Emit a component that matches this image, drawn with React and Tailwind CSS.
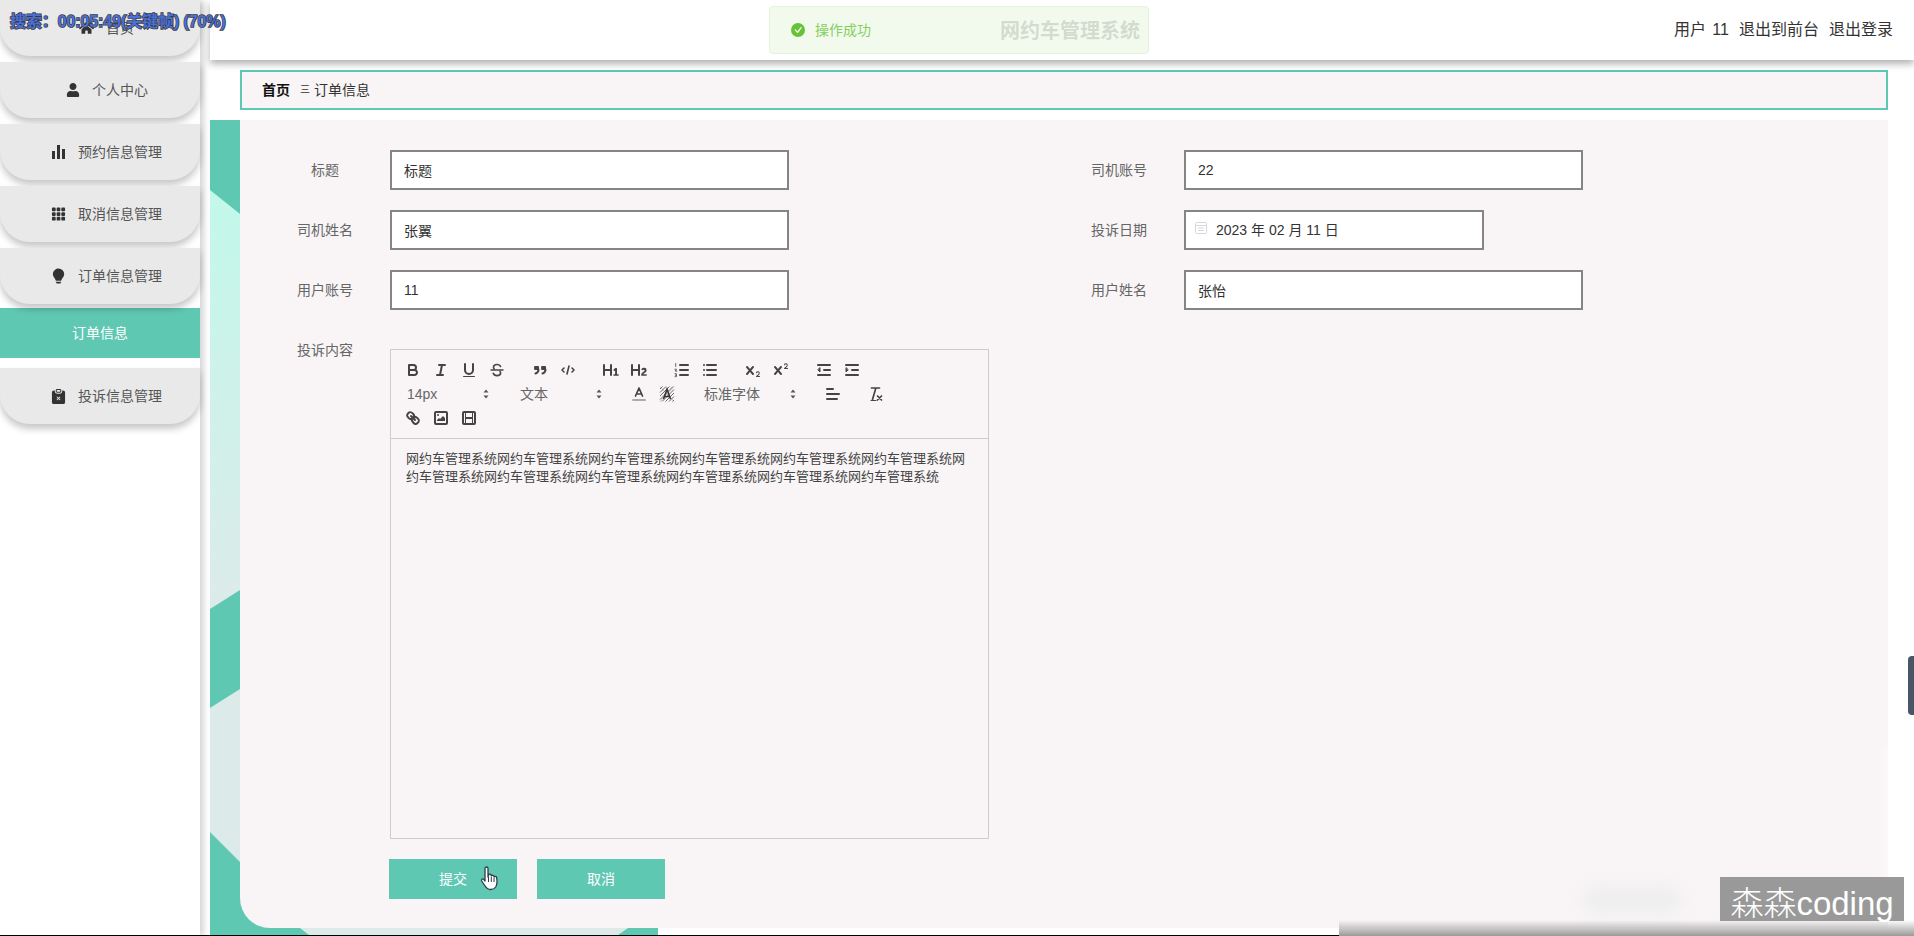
import React from 'react';
import { BsCheckCircleFill, BsClipboardXFill, BsGrid3X3GapFill, BsLightbulbFill } from 'react-icons/bs';
import { FaHome, FaUser } from 'react-icons/fa';

const FONT = 'font-["Liberation_Sans","Noto_Sans_CJK_SC",sans-serif]';

// Sidebar bar chart glyph
const BarsIcon = () => (
  <svg width="14" height="14" viewBox="0 0 14 14" fill="#333">
    <rect x="0" y="6" width="3" height="8" />
    <rect x="5" y="0" width="3" height="14" />
    <rect x="10" y="4" width="3" height="10" />
  </svg>
);

const menuTop = [
  { label: '首页', icon: <FaHome size={16} color="#333" /> },
  { label: '个人中心', icon: <FaUser size={14} color="#333" /> },
  { label: '预约信息管理', icon: <BarsIcon /> },
  { label: '取消信息管理', icon: <BsGrid3X3GapFill size={16} color="#333" /> },
  { label: '订单信息管理', icon: <BsLightbulbFill size={16} color="#333" /> },
];

function MenuItem({ item }) {
  return (
    <div className="flex h-14 items-center justify-center gap-[12px] rounded-b-[30px] bg-[#eae9e9] pl-[13px] text-sm text-[#555] shadow-[0_5px_7px_rgba(0,0,0,0.22)]">
      <span className="flex w-[15px] justify-center">{item.icon}</span>
      <span>{item.label}</span>
    </div>
  );
}

function Sidebar() {
  return (
    <aside className="z-20 w-[200px] shrink-0 bg-white shadow-[4px_0_6px_rgba(0,0,0,0.16)]">
      <div className="flex flex-col gap-1.5">
        {menuTop.map((item) => (
          <MenuItem key={item.label} item={item} />
        ))}
      </div>
      <div className="mt-1 flex h-[50px] items-center justify-center bg-[#5fc8b3] text-sm text-white">订单信息</div>
      <div className="mt-[10px]">
        <MenuItem item={{ label: '投诉信息管理', icon: <BsClipboardXFill size={15} color="#333" /> }} />
      </div>
    </aside>
  );
}

function Field({ label, value, date }) {
  return (
    <div className="flex h-10 w-[794px] items-center">
      <label className="mr-[5px] w-[120px] text-center text-sm text-[#666]">{label}</label>
      {date ? (
        <div className="flex h-10 w-[300px] items-center border-2 border-[#858585] bg-white pl-2 text-sm text-[#333]">
          <svg width="14" height="14" viewBox="0 0 14 14" fill="none" stroke="#d5d8de" className="mr-2 -mt-1">
            <rect x="1.5" y="1.5" width="11" height="11" rx="1" />
            <path d="M1.5 4.5h11M4 7h6M4 9.500h6" />
          </svg>
          {value}
        </div>
      ) : (
        <input
          readOnly
          value={value}
          className="h-10 w-[399px] border-2 border-[#858585] bg-white px-3 text-sm text-[#333] outline-none"
        />
      )}
    </div>
  );
}

// Editor toolbar icons, 18x18 like the original editor
const Ico = ({ children }) => (
  <svg
    width="18"
    height="18"
    viewBox="0 0 18 18"
    fill="none"
    stroke="#444"
    strokeWidth="2"
    strokeLinecap="round"
    strokeLinejoin="round"
  >
    {children}
  </svg>
);

const xMark = 'M9.65,5.241a1,1,0,0,0-1.409.108L6,7.964,3.759,5.349A1,1,0,0,0,2.241,6.649L4.684,9.5,2.241,12.35A1,1,0,0,0,3.759,13.65L6,11.036,8.241,13.65a1,1,0,1,0,1.518-1.3L7.316,9.5,9.759,6.651A1,1,0,0,0,9.65,5.241Z';

const icons = {
  bold: (
    <Ico>
      <path d="M5,4H9.5A2.5,2.5,0,0,1,12,6.5v0A2.5,2.5,0,0,1,9.5,9H5V4Z" />
      <path d="M5,9h5.5A2.5,2.5,0,0,1,13,11.5v0A2.5,2.5,0,0,1,10.5,14H5V9Z" />
    </Ico>
  ),
  italic: (
    <Ico>
      <path d="M7 4h6M5 14h6M8 14l2-10" />
    </Ico>
  ),
  underline: (
    <Ico>
      <path d="M5,3V9a4,4,0,0,0,8,0V3" />
      <rect x="3" y="15" width="12" height="1" rx=".5" fill="#444" stroke="none" />
    </Ico>
  ),
  strike: (
    <Ico>
      <path d="M3 9h12" strokeWidth="1.4" />
      <path d="M12.5 5.5C12 4.1 10.7 3.5 9 3.5c-2 0-3.5 1-3.5 2.7 0 .7.3 1.3.8 1.8M12 10.5c.4.5.6 1 .6 1.5 0 1.700-1.600 2.600-3.600 2.600-1.900 0-3.300-.8-3.700-2.300" strokeWidth="1.600" />
    </Ico>
  ),
  quote: (
    <Ico>
      <g fill="#444" strokeWidth="1">
        <rect x="4" y="5.500" width="3.500" height="3" />
        <rect x="11" y="5.500" width="3.500" height="3" />
        <path d="M7.500,8.500c0,2.200-1.500,3.500-3,4M14.500,8.500c0,2.200-1.500,3.500-3,4" fill="none" strokeWidth="2" />
      </g>
    </Ico>
  ),
  code: (
    <Ico>
      <path d="M5 7 3 9l2 2M13 7l2 2-2 2M10 5 8 13" strokeWidth="1.600" />
    </Ico>
  ),
  h1: (
    <svg width="18" height="18" viewBox="0 0 18 18" fill="#444">
      <path d="M10,4V14a1,1,0,0,1-2,0V10H3v4a1,1,0,0,1-2,0V4A1,1,0,0,1,3,4V8H8V4a1,1,0,0,1,2,0Zm6.06787,9.209H14.98975V7.59863a.54085.54085,0,0,0-.605-.60547h-.62744a1.01119,1.01119,0,0,0-.748.29688L11.645,8.56641a.5435.5435,0,0,0-.022.8584l.28613.30762a.53861.53861,0,0,0,.84717.0332l.09912-.08789a1.2137,1.2137,0,0,0,.2417-.35254h.02246s-.01123.30859-.01123.60547V13.209H12.041a.54085.54085,0,0,0-.605.60547v.43945a.54085.54085,0,0,0,.605.60547h4.02686a.54085.54085,0,0,0,.605-.60547v-.43945A.54085.54085,0,0,0,16.06787,13.209Z" />
    </svg>
  ),
  h2: (
    <svg width="18" height="18" viewBox="0 0 18 18" fill="#444">
      <path d="M16.73975,13.81445v.43945a.54085.54085,0,0,1-.605.60547H11.855a.58392.58392,0,0,1-.64893-.60547V14.0127c0-2.90527,3.39941-3.42187,3.39941-4.55469a.77675.77675,0,0,0-.84717-.78125,1.17684,1.17684,0,0,0-.83594.38477c-.2749.26367-.561.374-.85791.13184l-.4292-.34082c-.30811-.24219-.38525-.51758-.1543-.81445a2.97155,2.97155,0,0,1,2.45361-1.17676,2.45393,2.45393,0,0,1,2.68408,2.40918c0,2.45312-3.1792,2.92676-3.27832,3.93848h2.79443A.54085.54085,0,0,1,16.73975,13.81445ZM9,3A.99974.99974,0,0,0,8,4V8H3V4A1,1,0,0,0,1,4V14a1,1,0,0,0,2,0V10H8v4a1,1,0,0,0,2,0V4A.99974.99974,0,0,0,9,3Z" />
    </svg>
  ),
  ol: (
    <Ico>
      <path d="M7 4h8M7 9h8M7 14h8" />
      <path d="M2.700 2.500v3M2 8.200h1.400v1h-1v1h1.400M2 12.700h1.400v3H2M2.400 14.200h1" strokeWidth=".8" />
    </Ico>
  ),
  ul: (
    <Ico>
      <path d="M6 4h9M6 9h9M6 14h9M3 4h.01M3 9h.01M3 14h.01" />
    </Ico>
  ),
  sub: (
    <svg width="18" height="18" viewBox="0 0 18 18" fill="#444">
      <path d="M15.5,15H13.861a3.858,3.858,0,0,0,1.914-2.975,1.8,1.8,0,0,0-1.6-1.751A1.921,1.921,0,0,0,12.021,11.7a.5,.5,0,1,0,.957.291h0a.914,.914,0,0,1,1.053-.725,.81,.81,0,0,1,.744.762c0,1.076-1.17,1.87-1.94,2.431A1.456,1.456,0,0,0,12,15.5a.5,.5,0,0,0,.5.5h3A.5,.5,0,0,0,15.5,15Z" />
      <path d={xMark} />
    </svg>
  ),
  sup: (
    <svg width="18" height="18" viewBox="0 0 18 18" fill="#444">
      <path d="M15.5,7H13.861a4.015,4.015,0,0,0,1.914-2.975,1.8,1.8,0,0,0-1.6-1.751A1.922,1.922,0,0,0,12.021,3.7a.5,.5,0,1,0,.957.291,.917,.917,0,0,1,1.053-.725,.81,.81,0,0,1,.744.762c0,1.077-1.164,1.925-1.934,2.486A1.423,1.423,0,0,0,12,7.5a.5,.5,0,0,0,.5.5h3A.5,.5,0,0,0,15.5,7Z" />
      <path d={xMark} />
    </svg>
  ),
  outdent: (
    <Ico>
      <path d="M3 14h12M3 4h12M9 9h6" />
      <path d="M5 7v4L3 9Z" fill="#444" strokeWidth="1" />
    </Ico>
  ),
  indent: (
    <Ico>
      <path d="M3 14h12M3 4h12M9 9h6" />
      <path d="M3 7v4l2-2Z" fill="#444" strokeWidth="1" />
    </Ico>
  ),
  color: (
    <Ico>
      <path d="M3 15h12" stroke="#aaa" />
      <path d="M5.500 11 9 3l3.500 8M11.630 9H6.380" strokeWidth="1.700" />
    </Ico>
  ),
  background: (
    <svg width="18" height="18" viewBox="0 0 18 18">
      <path d="M2 4l2.500-2.500M2 7.500 8 1.500M2 11l9.500-9.500M2 14.500 15 1.500M4 16.500 16 4.500M7.500 16.500l8.500-8.500M11 16.500l5-5M14.500 16.500l1.500-1.500" stroke="#666" strokeWidth="1" />
      <path d="M2 1.500 16 16.500M16 1.500 2 16.500" stroke="#888" strokeWidth=".5" />
      <path d="M5.500 14 9 4l3.500 10M11.600 11.500H6.400" fill="none" stroke="#333" strokeWidth="1.500" />
    </svg>
  ),
  align: (
    <Ico>
      <path d="M3 9h12M3 14h10M3 4h6" />
    </Ico>
  ),
  clean: (
    <Ico>
      <path d="M4.500 3h8M5.500 14.500 8.850 3M10.500 11l4 4M14.500 11l-4 4" strokeWidth="1.700" />
      <rect x="3.500" y="15" width="6" height="1" rx=".5" fill="#444" stroke="none" />
    </Ico>
  ),
  link: (
    <Ico>
      <path d="M7 7l4 4" />
      <path d="M8.900,4.577a3.476,3.476,0,0,1,.36,4.679A3.476,3.476,0,0,1,4.577,8.900C3.185,7.500,2.035,6.400,4.217,4.217S7.500,3.185,8.900,4.577Z" />
      <path d="M13.423,9.100a3.476,3.476,0,0,0-4.679-.36,3.476,3.476,0,0,0,.36,4.679c1.392,1.392,2.500,2.542,4.679.36S14.815,10.500,13.423,9.100Z" />
    </Ico>
  ),
  image: (
    <Ico>
      <rect x="3" y="3" width="12" height="12" rx="1" />
      <circle cx="6" cy="6" r="1" fill="#444" stroke="none" />
      <path d="M5 12v-1l2-2 1 1 3-3 2 2v3Z" fill="#444" stroke="none" />
    </Ico>
  ),
  video: (
    <Ico>
      <rect x="3" y="3" width="12" height="12" rx="1" />
      <rect x="5" y="3" width="1" height="12" fill="#444" stroke="none" />
      <rect x="12" y="3" width="1" height="12" fill="#444" stroke="none" />
      <rect x="5" y="8" width="8" height="2" fill="#444" stroke="none" />
    </Ico>
  ),
};

const Btn = ({ name }) => <span className="flex h-6 w-7 items-center justify-center">{icons[name]}</span>;

const Group = ({ names }) => (
  <span className="mr-[15px] flex">
    {names.map((n) => (
      <Btn key={n} name={n} />
    ))}
  </span>
);

function Picker({ label, width }) {
  return (
    <span className={`mr-[15px] flex h-6 items-center justify-between pl-2 text-sm text-[#666] ${width}`}>
      {label}
      <svg width="18" height="18" viewBox="0 0 18 18" fill="#555" className="mr-0.5">
        <path d="M6.500 10.500h5L9 13.500ZM6.500 7.500h5L9 4.500Z" />
      </svg>
    </span>
  );
}

function Editor() {
  const text = '网约车管理系统'.repeat(12);
  return (
    <div className="mt-[19px] flex h-[490px] w-[599px] flex-col border border-[#ccc]">
      <div className="flex flex-col border-b border-[#ccc] p-2">
        <div className="flex">
          <Group names={['bold', 'italic', 'underline', 'strike']} />
          <Group names={['quote', 'code']} />
          <Group names={['h1', 'h2']} />
          <Group names={['ol', 'ul']} />
          <Group names={['sub', 'sup']} />
          <Group names={['outdent', 'indent']} />
        </div>
        <div className="flex">
          <Picker label="14px" width="w-[98px]" />
          <Picker label="文本" width="w-[98px]" />
          <Group names={['color', 'background']} />
          <Picker label="标准字体" width="w-[108px]" />
          <Group names={['align']} />
          <Group names={['clean']} />
        </div>
        <div className="flex">
          <Group names={['link', 'image', 'video']} />
        </div>
      </div>
      <div className="px-[15px] pt-[11px] text-[13px] leading-[18px] text-[#444]">{text}</div>
    </div>
  );
}

function Header() {
  return (
    <header className="relative z-10 ml-[10px] flex h-[60px] items-center justify-end bg-white pr-[21px] text-base text-[#333] shadow-[0_4px_7px_rgba(0,0,0,0.3)]">
      <span className="absolute left-[790px] top-[19px] text-xl font-bold leading-6 text-[#333]">网约车管理系统</span>
      <div className="flex gap-[10px]">
        <span className="[word-spacing:2px]">用户 11</span>
        <span>退出到前台</span>
        <span>退出登录</span>
      </div>
      <div className="absolute left-[559px] top-[6px] flex h-12 w-[380px] items-center gap-[10px] rounded border border-[#e1f3d8] bg-[#f0f9eb]/85 pl-[21px] text-sm text-[#85cf60]">
        <BsCheckCircleFill size={14} color="#67c23a" />
        操作成功
      </div>
    </header>
  );
}

// Decorative background that shows left of and under the form panel
function BackgroundStrip() {
  return (
    <svg className="absolute left-[10px] top-[120px]" width="448" height="815" viewBox="0 0 448 815">
      <defs>
        <linearGradient id="mint" x1="0" y1="0" x2="0" y2="1">
          <stop offset="0" stopColor="#c2f8ea" />
          <stop offset="1" stopColor="#dcebe9" />
        </linearGradient>
      </defs>
      <rect width="448" height="815" fill="#5fc8b3" />
      <path d="M0 70 30 94V470L0 489Z" fill="url(#mint)" />
      <path d="M0 588 30 569V742L0 712Z" fill="#dcebe9" />
      <path d="M90 808 99 815H408L418 808Z" fill="#dcebe9" />
    </svg>
  );
}

export default function App() {
  return (
    <div className={`relative flex h-[936px] w-[1914px] overflow-hidden bg-white ${FONT}`}>
      <Sidebar />
      <main className="relative flex-1">
        <BackgroundStrip />
        <Header />
        <div className="relative ml-10 mt-[10px] flex h-10 w-[1648px] items-center border-2 border-[#5fc8b3] bg-[#f9f5f6] pl-5 text-sm text-[#333]">
          <span className="font-bold text-[#111]">首页</span>
          <span className="ml-[10px] mr-1 text-[10px]">三</span>
          <span>订单信息</span>
        </div>
        <div className="relative ml-10 mt-[10px] h-[808px] w-[1648px] rounded-bl-[30px] bg-[#f9f5f6] pl-[25px] pt-[30px]">
          <div className="flex flex-col gap-5">
            <div className="flex">
              <Field label="标题" value="标题" />
              <Field label="司机账号" value="22" />
            </div>
            <div className="flex">
              <Field label="司机姓名" value="张翼" />
              <Field label="投诉日期" value="2023 年 02 月 11 日" date />
            </div>
            <div className="flex">
              <Field label="用户账号" value="11" />
              <Field label="用户姓名" value="张怡" />
            </div>
            <div className="flex items-start">
              <label className="mr-[5px] flex h-10 w-[120px] items-center justify-center text-sm text-[#666]">投诉内容</label>
              <Editor />
            </div>
          </div>
          <div className="ml-[124px] mt-5 flex gap-5">
            <button className="h-10 w-32 bg-[#5fc8b3] text-sm text-white">提交</button>
            <button className="h-10 w-32 bg-[#5fc8b3] text-sm text-white">取消</button>
          </div>
        </div>
      </main>

      {/* Things laid over the recording: hand cursor, player overlay, watermark */}
      <svg className="absolute left-[480px] top-[866px] z-30" width="20" height="26" viewBox="0 0 20 26">
        <path
          d="M5 2.500a1.500 1.500 0 0 1 3 0V11l.5-2a1.400 1.400 0 0 1 2.700.3l.2.7a1.400 1.400 0 0 1 2.600.4l.2.8a1.300 1.300 0 0 1 2.500.5c.6 4 .4 7-1 9.300-1 1.500-2.500 2.500-5 2.500-3 0-4.500-1.500-6-4l-3-4.500c-.8-1.300.8-2.700 2-1.700L5 15Z"
          fill="#fff"
          stroke="#2f3b47"
          strokeWidth="1.300"
          strokeLinejoin="round"
        />
        <path d="M8.500 11v5M11.300 11v5M14 12v4" stroke="#2f3b47" strokeWidth="1" />
      </svg>
      <div className="absolute left-[10px] top-[10px] z-30 whitespace-nowrap text-base font-bold leading-6 tracking-[-0.1px] text-[#4a6fd8] [-webkit-text-stroke:1.5px_#3a3a3a] [paint-order:stroke_fill]">
        搜索：00:05:49(关键帧) (70%)
      </div>
      <div className="absolute left-[1908px] top-[656px] z-30 h-[59px] w-[6px] rounded-l bg-[#4a5568]" />
      <div className="absolute left-[1876px] top-[748px] z-30 h-[172px] w-[38px] bg-gradient-to-r from-transparent to-white" />
      <div className="absolute left-[1582px] top-[886px] z-30 h-7 w-[100px] rounded-full bg-[#eeeeee] blur-sm" />
      <div className="absolute bottom-0 left-[1339px] right-0 z-30 h-4 bg-gradient-to-b from-transparent to-[#999]" />
      <div className="absolute bottom-0 left-0 z-30 h-px w-[1339px] bg-black" />
      <div className="absolute left-[1720px] top-[877px] z-40 flex h-11 w-[184px] items-center justify-center bg-[#999] pt-2 text-[33px] font-light leading-none text-white">
        森森coding
      </div>
    </div>
  );
}
